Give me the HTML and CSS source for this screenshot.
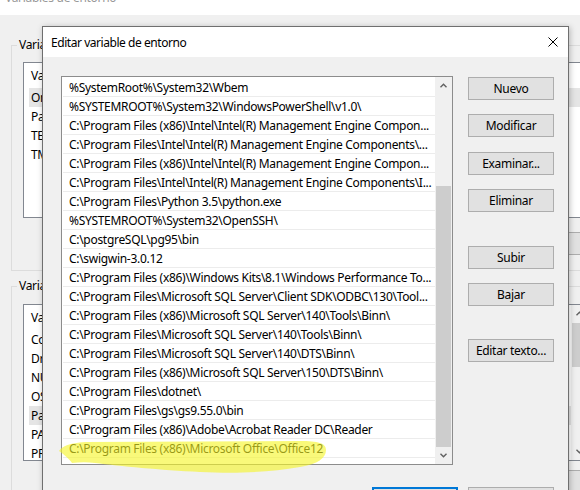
FILE: index.html
```html
<!DOCTYPE html>
<html lang="es">
<head>
<meta charset="utf-8">
<title>Editar variable de entorno</title>
<link rel="stylesheet" href="styles.css">
</head>
<body>
<div class="bgwin">
  <div class="bg-title"><span>Variables de entorno</span></div>
  <div class="bg-body">
    <fieldset class="group g1">
      <legend>Variables de usuario para Usuario</legend>
      <div class="lv lv1">
        <div class="lv-main">
          <div class="lv-head"><span class="c1">Variable</span><span>Valor</span></div>
          <div class="lv-row sel"><span class="c1">OneDrive</span><span>C:\Users\Usuario\OneDrive</span></div>
          <div class="lv-row"><span class="c1">Path</span><span>C:\Users\Usuario\AppData\Local\Microsoft\WindowsApps;</span></div>
          <div class="lv-row"><span class="c1">TEMP</span><span>C:\Users\Usuario\AppData\Local\Temp</span></div>
          <div class="lv-row"><span class="c1">TMP</span><span>C:\Users\Usuario\AppData\Local\Temp</span></div>
        </div>
      </div>
      <div class="bg-btns b1">
        <button class="btn bgbtn">Nuevo...</button>
        <button class="btn bgbtn">Editar...</button>
        <button class="btn bgbtn">Eliminar</button>
      </div>
    </fieldset>
    <fieldset class="group g2">
      <legend>Variables del sistema</legend>
      <div class="lv lv2">
        <div class="lv-main">
          <div class="lv-head"><span class="c1">Variable</span><span>Valor</span></div>
          <div class="lv-row"><span class="c1">ComSpec</span><span>C:\Windows\system32\cmd.exe</span></div>
          <div class="lv-row"><span class="c1">DriverData</span><span>C:\Windows\System32\Drivers\DriverData</span></div>
          <div class="lv-row"><span class="c1">NUMBER_OF_PROCESSORS</span><span>4</span></div>
          <div class="lv-row"><span class="c1">OS</span><span>Windows_NT</span></div>
          <div class="lv-row sel"><span class="c1">Path</span><span>C:\Windows\system32;C:\Windows;</span></div>
          <div class="lv-row"><span class="c1">PATHEXT</span><span>.COM;.EXE;.BAT;.CMD;.VBS</span></div>
          <div class="lv-row"><span class="c1">PROCESSOR_ARCHITECTURE</span><span>AMD64</span></div>
        </div>
        <div class="vscroll">
          <div class="sb-btn"><svg width="7" height="5" viewBox="0 0 7 5"><polyline points="0.5,4.2 3.5,1.2 6.5,4.2" class="chev"/></svg></div>
          <div class="sb-track"><div class="sb-thumb small"></div></div>
          <div class="sb-btn"><svg width="7" height="5" viewBox="0 0 7 5"><polyline points="0.5,0.8 3.5,3.8 6.5,0.8" class="chev"/></svg></div>
        </div>
      </div>
      <div class="bg-btns b2">
        <button class="btn bgbtn">Nuevo...</button>
        <button class="btn bgbtn">Editar...</button>
        <button class="btn bgbtn">Eliminar</button>
      </div>
    </fieldset>
  </div>
</div>

<div class="dialog">
  <div class="dlg-title">
    <span class="dlg-caption">Editar variable de entorno</span>
    <svg class="close" width="10" height="10" viewBox="0 0 10 10"><path d="M0.5 0.5 L9.5 9.5 M9.5 0.5 L0.5 9.5"/></svg>
  </div>
  <div class="dlg-body">
    <div class="dlg-main">
      <div class="listbox">
        <div class="lb-rows">
          <div class="lb-row">%SystemRoot%\System32\Wbem</div>
          <div class="lb-row">%SYSTEMROOT%\System32\WindowsPowerShell\v1.0\</div>
          <div class="lb-row">C:\Program Files (x86)\Intel\Intel(R) Management Engine Compon...</div>
          <div class="lb-row">C:\Program Files\Intel\Intel(R) Management Engine Components\...</div>
          <div class="lb-row">C:\Program Files (x86)\Intel\Intel(R) Management Engine Compon...</div>
          <div class="lb-row">C:\Program Files\Intel\Intel(R) Management Engine Components\I...</div>
          <div class="lb-row">C:\Program Files\Python 3.5\python.exe</div>
          <div class="lb-row">%SYSTEMROOT%\System32\OpenSSH\</div>
          <div class="lb-row">C:\postgreSQL\pg95\bin</div>
          <div class="lb-row">C:\swigwin-3.0.12</div>
          <div class="lb-row">C:\Program Files (x86)\Windows Kits\8.1\Windows Performance To...</div>
          <div class="lb-row">C:\Program Files\Microsoft SQL Server\Client SDK\ODBC\130\Tool...</div>
          <div class="lb-row">C:\Program Files (x86)\Microsoft SQL Server\140\Tools\Binn\</div>
          <div class="lb-row">C:\Program Files\Microsoft SQL Server\140\Tools\Binn\</div>
          <div class="lb-row">C:\Program Files\Microsoft SQL Server\140\DTS\Binn\</div>
          <div class="lb-row">C:\Program Files (x86)\Microsoft SQL Server\150\DTS\Binn\</div>
          <div class="lb-row">C:\Program Files\dotnet\</div>
          <div class="lb-row">C:\Program Files\gs\gs9.55.0\bin</div>
          <div class="lb-row">C:\Program Files (x86)\Adobe\Acrobat Reader DC\Reader</div>
          <div class="lb-row">C:\Program Files (x86)\Microsoft Office\Office12</div>
        </div>
        <div class="vscroll">
          <div class="sb-btn"><svg width="7" height="5" viewBox="0 0 7 5"><polyline points="0.5,4.2 3.5,1.2 6.5,4.2" class="chev"/></svg></div>
          <div class="sb-track"><div class="sb-thumb big"></div></div>
          <div class="sb-btn"><svg width="7" height="5" viewBox="0 0 7 5"><polyline points="0.5,0.8 3.5,3.8 6.5,0.8" class="chev"/></svg></div>
        </div>
      </div>
      <div class="btncol">
        <button class="btn b-nuevo">Nuevo</button>
        <button class="btn b-mod">Modificar</button>
        <button class="btn b-exa">Examinar...</button>
        <button class="btn b-eli">Eliminar</button>
        <button class="btn b-sub">Subir</button>
        <button class="btn b-baj">Bajar</button>
        <button class="btn b-edt">Editar texto...</button>
      </div>
    </div>
    <div class="dlg-foot">
      <button class="btn default">Aceptar</button>
      <button class="btn">Cancelar</button>
    </div>
  </div>
</div>

<svg class="marker" width="580" height="490" viewBox="0 0 580 490">
  <path class="hl" d="M59,451 C62,446 70,443 85,442 L300,441 C318,441 326,443 326,450 C326,458 318,464 300,467 C270,472 240,474 200,472 C160,470 120,466 95,463 C88,462 80,462 72,463 C70,460 66,456 59,451 Z"/>
</svg>
</body>
</html>
```
FILE: styles.css
```css
* { box-sizing: border-box; }
html, body { margin: 0; padding: 0; }
body {
  width: 580px;
  height: 490px;
  overflow: hidden;
  position: relative;
  background: #f0f0f0;
  font-family: "Noto Sans", "Segoe UI", sans-serif;
  font-size: 12px;
  letter-spacing: -0.3px;
  color: #000;
}

/* ---------- background window ---------- */
.bgwin { width: 720px; }
.bg-title {
  height: 15px;
  background: #fff;
  overflow: hidden;
  color: #999;
  padding-left: 5px;
}
.bg-title span { display: block; line-height: 16px; margin-top: -10px; }
.bg-body { padding: 22px 0 0 11px; }

.group {
  margin: 0;
  padding: 9px 0 15px 0;
  border: 1px solid #dcdcdc;
  width: 690px;
  min-width: 0;
}
.group.g2 { margin-top: 7px; padding-top: 10px; }
.group legend {
  margin-left: 5px;
  padding: 0 2px;
  line-height: 16px;
  height: 16px;
}

.lv {
  margin-left: 11px;
  width: 566px;
  border: 1px solid #828790;
  background: #fff;
  display: flex;
  overflow: hidden;
}
.lv1 { height: 156px; }
.lv2 { height: 157px; }
.lv-main { flex: 1; min-width: 0; }
.lv-head {
  height: 25px;
  line-height: 25px;
  padding-left: 7px;
  display: flex;
  white-space: nowrap;
}
.lv-row {
  height: 19px;
  line-height: 19px;
  margin-left: 5px;
  padding-left: 2px;
  display: flex;
  white-space: nowrap;
}
.lv-row .c1 { width: 172px; }
.lv-head .c1 { width: 174px; }
.lv-row.sel { background: #e5e5e5; }

.bg-btns {
  margin-left: 11px;
  width: 646px;
  display: flex;
  justify-content: flex-end;
  gap: 8px;
}
.bg-btns.b1 { margin-top: 14px; }
.bg-btns.b2 { margin-top: 9px; }
.bgbtn { width: 80px; }

/* ---------- common controls ---------- */
.btn {
  font: inherit;
  letter-spacing: inherit;
  color: #000;
  height: 23px;
  line-height: 21px;
  padding: 0;
  border: 1px solid #adadad;
  background: #e1e1e1;
  text-align: center;
  white-space: nowrap;
  display: block;
}
.vscroll {
  width: 17px;
  flex: none;
  background: #f0f0f0;
  display: flex;
  flex-direction: column;
}
.sb-btn {
  height: 17px;
  flex: none;
  display: flex;
  align-items: center;
  justify-content: center;
}
.sb-btn svg { display: block; }
.chev { fill: none; stroke: #606060; stroke-width: 1.4; }
.sb-track { flex: 1; }
.sb-thumb { background: #cdcdcd; margin: 0 1px; }
.sb-thumb.big { margin-top: 92px; height: 261px; }
.sb-thumb.small { margin-top: 1px; height: 44px; }

/* ---------- dialog ---------- */
.dialog {
  position: absolute;
  left: 42px;
  top: 26px;
  width: 527px;
  height: 500px;
  border: 1px solid #6f6f6f;
  background: #f0f0f0;
  box-shadow: 1px 1px 6px rgba(0, 0, 0, 0.25);
}
.dlg-title {
  height: 30px;
  background: #fff;
  display: flex;
  align-items: center;
  justify-content: space-between;
  padding: 0 10px 0 8px;
}
.dlg-caption { letter-spacing: -0.45px; }
.close { display: block; }
.close path { stroke: #000; stroke-width: 1; fill: none; }

.dlg-body { padding: 19px 14px 0 18px; }
.dlg-main { display: flex; }
.listbox {
  width: 392px;
  height: 389px;
  border: 1px solid #8c8c8c;
  background: #fff;
  display: flex;
}
.lb-rows { flex: 1; min-width: 0; padding-top: 1px; overflow: hidden; }
.lb-row {
  height: 19px;
  line-height: 19px;
  margin-left: 1px;
  padding-left: 6px;
  border-bottom: 1px solid #ececec;
  white-space: nowrap;
  overflow: hidden;
}

.btncol { margin-left: 15px; width: 86px; display: flex; flex-direction: column; }
.btncol .btn { width: 86px; }
.b-nuevo { margin-top: 1px; }
.b-mod { margin-top: 14px; }
.b-exa { margin-top: 15px; }
.b-eli { margin-top: 14px; }
.b-sub { margin-top: 34px; }
.b-baj { margin-top: 14px; }
.b-edt { margin-top: 33px; }

.dlg-foot {
  margin-top: 22px;
  display: flex;
  justify-content: flex-end;
  gap: 10px;
}
.dlg-foot .btn { width: 86px; }
.btn.default { border-color: #0078d7; box-shadow: inset 0 0 0 1px #0078d7; }

/* ---------- highlighter mark ---------- */
.marker { position: absolute; left: 0; top: 0; pointer-events: none; }
.hl { fill: rgb(246, 246, 40); opacity: 0.62; }
```
